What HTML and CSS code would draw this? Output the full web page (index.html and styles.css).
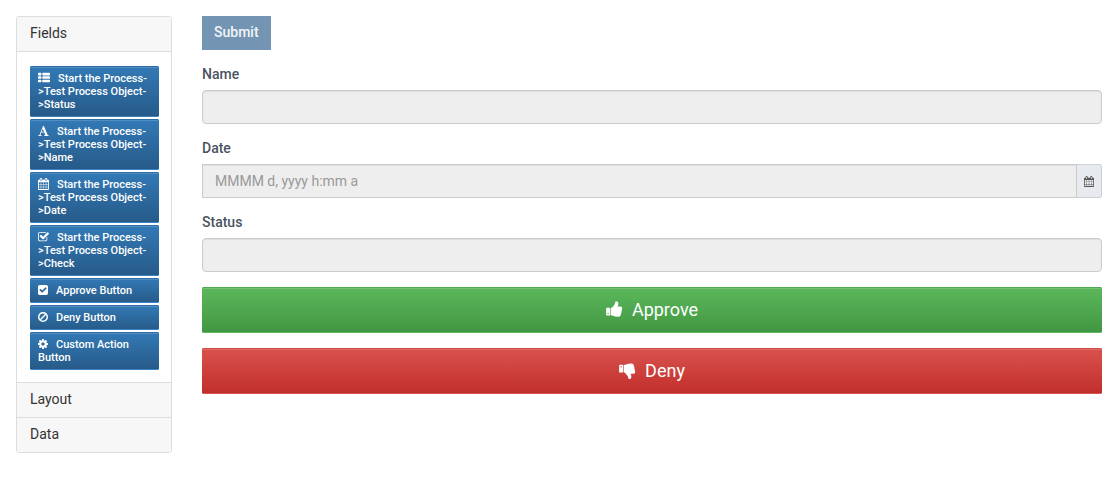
FILE: index.html
```html
<!DOCTYPE html>
<html lang="en">
<head>
<meta charset="utf-8">
<title>Form Designer</title>
<link rel="stylesheet" href="styles.css">
</head>
<body>
<svg class="sprite" aria-hidden="true">
  <symbol id="i-list" viewBox="0 0 1792 1792"><path d="M512 1248v192q0 40-28 68t-68 28h-320q-40 0-68-28t-28-68v-192q0-40 28-68t68-28h320q40 0 68 28t28 68zm0-512v192q0 40-28 68t-68 28h-320q-40 0-68-28t-28-68v-192q0-40 28-68t68-28h320q40 0 68 28t28 68zm1280 512v192q0 40-28 68t-68 28h-960q-40 0-68-28t-28-68v-192q0-40 28-68t68-28h960q40 0 68 28t28 68zm-1280-1024v192q0 40-28 68t-68 28h-320q-40 0-68-28t-28-68v-192q0-40 28-68t68-28h320q40 0 68 28t28 68zm1280 512v192q0 40-28 68t-68 28h-960q-40 0-68-28t-28-68v-192q0-40 28-68t68-28h960q40 0 68 28t28 68zm0-512v192q0 40-28 68t-68 28h-960q-40 0-68-28t-28-68v-192q0-40 28-68t68-28h960q40 0 68 28t28 68z"/></symbol>
  <symbol id="i-font" viewBox="64 0 1664 1792"><path d="M789 559l-170 450q33 0 136.5 2t160.5 2q19 0 57-2-87-253-184-452zm-725 1105l2-79q23-7 56-12.5t57-10.5 49.500-14.500 44.500-29 31-50.500l237-616 280-724h128q8 14 11 21l205 480q33 78 106 257.500t114 274.500q15 34 58 144.500t72 168.500q20 45 35 57 19 15 88 29.500t84 20.500q6 38 6 57 0 5-.5 13.500t-.5 12.500q-63 0-190-8t-191-8q-76 0-215 7t-178 8q0-43 4-78l131-28q1 0 12.500-2.500t15.500-3.500 14.500-4.500 15-6.500 11-8 9-11 2.500-14q0-16-31-96.500t-72-177.500-42-100l-450-2q-26 58-76.500 195.500t-50.500 162.500q0 22 14 37.500t43.500 24.500 48.500 13.500 57 8.500 41 4q1 19 1 58 0 9-2 27-58 0-174.500-10t-174.500-10q-8 0-26.500 4t-21.500 4q-80 14-188 14z"/></symbol>
  <symbol id="i-calendar" viewBox="64 0 1664 1792"><path d="M192 1664h288v-288h-288v288zm352 0h320v-288h-320v288zm-352-352h288v-320h-288v320zm352 0h320v-320h-320v320zm-352-384h288v-288h-288v288zm736 736h320v-288h-320v288zm-384-736h320v-288h-320v288zm768 736h288v-288h-288v288zm-384-352h320v-320h-320v320zm-352-864v-288q0-13-9.5-22.5t-22.5-9.500h-64q-13 0-22.500 9.500t-9.500 22.500v288q0 13 9.500 22.500t22.500 9.500h64q13 0 22.500-9.500t9.500-22.500zm736 864h288v-320h-288v320zm-384-384h320v-288h-320v288zm384 0h288v-288h-288v288zm32-480v-288q0-13-9.500-22.500t-22.500-9.500h-64q-13 0-22.500 9.500t-9.500 22.500v288q0 13 9.500 22.500t22.500 9.500h64q13 0 22.500-9.500t9.500-22.500zm384-64v1280q0 52-38 90t-90 38h-1408q-52 0-90-38t-38-90v-1280q0-52 38-90t90-38h128v-96q0-66 47-113t113-47h64q66 0 113 47t47 113v96h384v-96q0-66 47-113t113-47h64q66 0 113 47t47 113v96h128q52 0 90 38t38 90z"/></symbol>
  <symbol id="i-tick" viewBox="64 0 1664 1792"><path d="M1472 930v318q0 119-84.5 203.500t-203.500 84.500h-832q-119 0-203.500-84.500t-84.500-203.500v-832q0-119 84.500-203.500t203.500-84.500h832q63 0 117 25 15 7 18 23 3 17-9 29l-49 49q-10 10-23 10-3 0-9-2-23-6-45-6h-832q-66 0-113 47t-47 113v832q0 66 47 113t113 47h832q66 0 113-47t47-113v-254q0-13 9-22l64-64q10-10 23-10 6 0 12 3 20 8 20 29zm231-489l-814 814q-24 24-57 24t-57-24l-430-430q-24-24-24-57t24-57l110-110q24-24 57-24t57 24l263 263 647-647q24-24 57-24t57 24l110 110q24 24 24 57t-24 57z"/></symbol>
  <symbol id="i-square" viewBox="128 0 1536 1792"><path d="M813 1299l614-614q19-19 19-45t-19-45l-102-102q-19-19-45-19t-45 19l-467 467-211-211q-19-19-45-19t-45 19l-102 102q-19 19-19 45t19 45l358 358q19 19 45 19t45-19zm851-883v960q0 119-84.500 203.500t-203.500 84.500h-960q-119 0-203.500-84.500t-84.500-203.500v-960q0-119 84.500-203.500t203.500-84.500h960q119 0 203.500 84.500t84.500 203.500z"/></symbol>
  <symbol id="i-ban" viewBox="128 0 1536 1792"><path d="M1440 893q0-161-87-295l-754 753q137 89 297 89 111 0 211.500-43.500t173.500-116.500 116-174.500 43-212.500zm-999 299l755-754q-135-91-300-91-148 0-273 73t-198 199-73 274q0 162 89 299zm1223-299q0 157-61 300t-163.500 246-245 164-298.500 61-298.500-61-245-164-163.500-246-61-300 61-299.500 163.500-245.500 245-164 298.500-61 298.500 61 245 164 163.500 245.500 61 299.500z"/></symbol>
  <symbol id="i-cog" viewBox="128 0 1536 1792"><path d="M1152 896q0-106-75-181t-181-75-181 75-75 181 75 181 181 75 181-75 75-181zm512-109v222q0 12-8 23t-20 13l-185 28q-19 54-39 91 35 50 107 138 10 12 10 25t-9 23q-27 37-99 108t-94 71q-12 0-26-9l-138-108q-44 23-91 38-16 136-29 186-7 28-36 28h-222q-14 0-24.500-8.500t-11.500-21.500l-28-184q-49-16-90-37l-141 107q-10 9-25 9-14 0-25-11-126-114-165-168-7-10-7-23 0-12 8-23 15-21 51-66.500t54-70.500q-27-50-41-99l-183-27q-13-2-21-12.500t-8-23.500v-222q0-12 8-23t19-13l186-28q14-46 39-92-40-57-107-138-10-12-10-24 0-10 9-23 26-36 98.500-107.500t94.500-71.500q13 0 26 10l138 107q44-23 91-38 16-136 29-186 7-28 36-28h222q14 0 24.500 8.500t11.500 21.500l28 184q49 16 90 37l142-107q9-9 24-9 13 0 25 10 129 119 165 170 7 8 7 22 0 12-8 23-15 21-51 66.500t-54 70.500q26 50 41 98l183 28q13 2 21 12.500t8 23.500z"/></symbol>
  <symbol id="i-up" viewBox="64 0 1664 1792"><path d="M320 1344q0-26-19-45t-45-19q-27 0-45.500 19t-18.500 45q0 27 18.500 45.500t45.500 18.500q26 0 45-18.500t19-45.500zm160-512v640q0 26-19 45t-45 19h-288q-26 0-45-19t-19-45v-640q0-26 19-45t45-19h288q26 0 45 19t19 45zm1184 0q0 86-55 149 15 44 15 76 3 76-43 137 17 56 0 117-15 57-54 94 9 112-49 181-64 76-197 78h-129q-66 0-144-15.500t-121.500-29-120.500-39.500q-123-43-158-44-26-1-45-19.500t-19-44.500v-641q0-25 18-43.500t43-20.500q24-2 76-59t101-121q68-87 101-120 18-18 31-48t17.500-48.500 13.500-60.500q7-39 12.500-61t19.500-52 34-50q19-19 45-19 46 0 82.500 10.500t60 26 40 40.500 24 45 12 50 5 45 .5 39q0 38-9.500 76t-19 60-27.500 56q-3 6-10 18t-11 22-8 24h277q78 0 135 57t57 135z"/></symbol>
  <symbol id="i-down" viewBox="64 0 1664 1792"><path d="M320 576q0 26-19 45t-45 19q-27 0-45.500-19t-18.500-45q0-27 18.500-45.500t45.500-18.500q26 0 45 18.500t19 45.500zm160 512v-640q0-26-19-45t-45-19h-288q-26 0-45 19t-19 45v640q0 26 19 45t45 19h288q26 0 45-19t19-45zm1129-149q55 61 55 149-1 78-57.500 135t-134.500 57h-277q4 14 8 24t11 22 10 18q18 37 27 57t19 58.500 10 76.500q0 24-.5 39t-5 45-12 50-24 45-40 40.500-60 26-82.500 10.500q-26 0-45-19-20-20-34-50t-19.500-52-12.500-61q-9-42-13.500-60.500t-17.500-48.500-31-48q-33-33-101-120-49-64-101-121t-76-59q-25-2-43-20.500t-18-43.500v-641q0-26 19-44.500t45-19.500q35-1 158-44 77-26 120.500-39.500t121.500-29 144-15.500h129q133 2 197 78 58 69 49 181 39 37 54 94 17 61 0 117 46 61 43 137 0 32-15 76z"/></symbol>
</svg>
<div class="layout">
  <aside class="accordion">
    <button type="button" class="accordion-head" aria-expanded="true">Fields</button>
    <div class="accordion-body">
      <button type="button" class="field"><svg class="icon icon-wide"><use href="#i-list"/></svg>Start the Process-&gt;Test Process Object-&gt;Status</button>
      <button type="button" class="field"><svg class="icon icon-mid"><use href="#i-font"/></svg>Start the Process-&gt;Test Process Object-&gt;Name</button>
      <button type="button" class="field"><svg class="icon icon-mid"><use href="#i-calendar"/></svg>Start the Process-&gt;Test Process Object-&gt;Date</button>
      <button type="button" class="field"><svg class="icon icon-mid"><use href="#i-tick"/></svg>Start the Process-&gt;Test Process Object-&gt;Check</button>
      <button type="button" class="field"><svg class="icon"><use href="#i-square"/></svg>Approve Button</button>
      <button type="button" class="field"><svg class="icon"><use href="#i-ban"/></svg>Deny Button</button>
      <button type="button" class="field"><svg class="icon"><use href="#i-cog"/></svg>Custom Action Button</button>
    </div>
    <button type="button" class="accordion-head" aria-expanded="false">Layout</button>
    <button type="button" class="accordion-head" aria-expanded="false">Data</button>
  </aside>
  <form class="form">
    <button type="button" class="submit" disabled>Submit</button>
    <div class="group">
      <label for="name">Name</label>
      <input id="name" class="control" type="text" disabled>
    </div>
    <div class="group">
      <label for="date">Date</label>
      <div class="input-group">
        <input id="date" class="control" type="text" placeholder="MMMM d, yyyy h:mm a" disabled>
        <button type="button" class="addon" aria-label="Choose date" disabled><svg class="icon-addon"><use href="#i-calendar"/></svg></button>
      </div>
    </div>
    <div class="group">
      <label for="status">Status</label>
      <input id="status" class="control" type="text" disabled>
    </div>
    <button type="button" class="action approve"><svg class="icon-large"><use href="#i-up"/></svg>Approve</button>
    <button type="button" class="action deny"><svg class="icon-large"><use href="#i-down"/></svg>Deny</button>
  </form>
</div>
</body>
</html>
```
FILE: styles.css
```css
* {
  box-sizing: border-box;
}

body {
  margin: 0;
  padding: 16px 12px 16px 16px;
  background: #fff;
  color: #333;
  font: 14px/20px Roboto, "Liberation Sans", sans-serif;
}

button,
input {
  margin: 0;
  font: inherit;
}

svg {
  fill: currentColor;
}

.sprite {
  display: none;
}

.layout {
  display: flex;
  align-items: flex-start;
  gap: 30px;
}

.accordion {
  flex: 0 0 156px;
  border: 1px solid #ddd;
  border-radius: 3px;
  overflow: hidden;
}

.accordion-head {
  display: block;
  width: 100%;
  padding: 6px 13px 8px;
  border: 0;
  background: #f7f7f7;
  color: #333;
  text-align: left;
}

.accordion-head + .accordion-head,
.accordion-body + .accordion-head {
  border-top: 1px solid #ddd;
}

.accordion-body {
  display: flex;
  flex-direction: column;
  gap: 2px;
  padding: 14px 12px 12px 13px;
  border-top: 1px solid #ddd;
}

.field {
  padding: 5px 7px;
  border: 1px solid transparent;
  border-top-color: #2e6ca5;
  border-bottom-color: #3a82c4;
  background: linear-gradient(#337ab7, #265a88) border-box;
  box-shadow: inset 0 1px 0 rgba(255, 255, 255, 0.15);
  color: #fff;
  font-size: 11px;
  font-weight: 500;
  line-height: 13px;
  text-align: left;
  overflow-wrap: anywhere;
}

.icon {
  width: 10px;
  height: 12px;
  margin-right: 8px;
  vertical-align: -2px;
}

.icon-mid {
  width: 11px;
}

.icon-wide {
  width: 12px;
}

.form {
  flex: 1;
  min-width: 0;
  display: flex;
  flex-direction: column;
  gap: 15px;
}

.submit {
  align-self: flex-start;
  padding: 6px 12px 8px;
  border: 0;
  background: #7394b3;
  color: #f1f4f7;
  font-weight: 500;
}

.group {
  display: flex;
  flex-direction: column;
  gap: 6px;
}

.group label {
  color: #4a5360;
  font-weight: 500;
  line-height: 19px;
}

.control {
  width: 100%;
  height: 34px;
  padding: 6px 12px;
  border: 1px solid #ccc;
  border-radius: 4px;
  background: #eee;
  box-shadow: inset 0 1px 1px rgba(0, 0, 0, 0.075);
  color: #555;
}

.control::placeholder {
  color: #999;
}

.input-group {
  display: flex;
}

.input-group .control {
  flex: 1;
  min-width: 0;
  border-radius: 0;
}

.addon {
  display: flex;
  align-items: center;
  justify-content: center;
  width: 25px;
  padding: 0;
  border: 1px solid #ccd0d8;
  border-left: 0;
  border-radius: 0 3px 3px 0;
  background: #e7eaee;
  color: #555;
}

.icon-addon {
  width: 10px;
  height: 11px;
}

.action {
  padding: 10px 16px;
  color: #fff;
  font-size: 18px;
  line-height: 24px;
  border: 1px solid transparent;
  box-shadow: inset 0 1px 0 rgba(255, 255, 255, 0.15);
}

.approve {
  border-top-color: #50a850;
  border-bottom-color: #5cb85c;
  background: linear-gradient(#5cb85c, #419641) border-box;
}

.deny {
  border-top-color: #d04a46;
  border-bottom-color: #d9534f;
  background: linear-gradient(#d9534f, #c12e2a) border-box;
}

.icon-large {
  width: 17px;
  height: 18px;
  margin-right: 9px;
  vertical-align: -2px;
}
```
